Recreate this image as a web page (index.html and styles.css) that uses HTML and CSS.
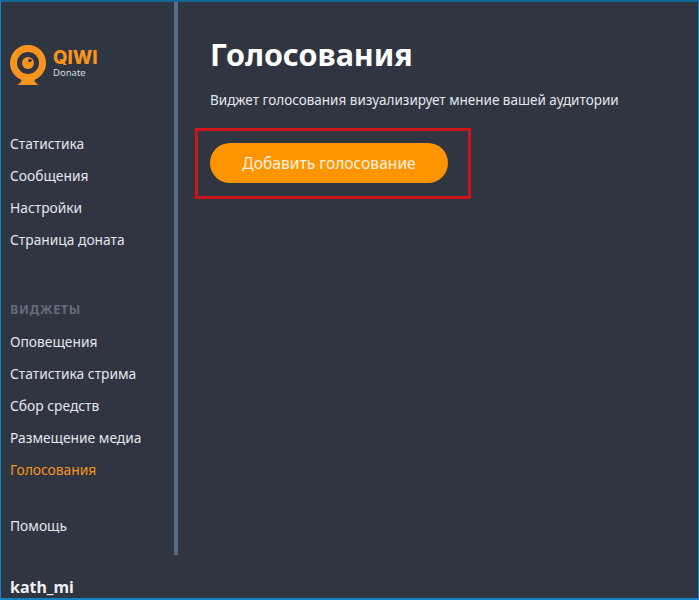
FILE: index.html
```html
<!DOCTYPE html>
<html lang="ru">
<head>
    <meta charset="UTF-8">
    <meta name="viewport" content="width=device-width, initial-scale=1.0">
    <title>Голосования</title>
    <link rel="stylesheet" href="styles.css">
</head>
<body>
    <div class="window">
        <aside class="sidebar">
            <div class="sidebar-inner">
                <a class="logo" href="#">
                    <svg class="logo-icon" width="37" height="41" viewBox="0 0 37 41">
                        <path d="M7 40 C10 39 12 36 12 32 H24 C24 36 26 39 29 40 Z" fill="#f7941d"/>
                        <circle cx="18" cy="18" r="14.5" fill="none" stroke="#f7941d" stroke-width="7"/>
                        <circle cx="18" cy="18" r="6" fill="#f7941d"/>
                        <circle cx="20" cy="15.5" r="1.7" fill="#2f3541"/>
                    </svg>
                    <div class="logo-text">
                        <span class="logo-name">QIWI</span>
                        <span class="logo-sub">Donate</span>
                    </div>
                </a>
                <nav class="nav nav-main">
                    <a href="#">Статистика</a>
                    <a href="#">Сообщения</a>
                    <a href="#">Настройки</a>
                    <a href="#">Страница доната</a>
                </nav>
                <h4 class="nav-title">ВИДЖЕТЫ</h4>
                <nav class="nav">
                    <a href="#">Оповещения</a>
                    <a href="#">Статистика стрима</a>
                    <a href="#">Сбор средств</a>
                    <a href="#">Размещение медиа</a>
                    <a class="active" href="#">Голосования</a>
                </nav>
                <nav class="nav nav-help">
                    <a href="#">Помощь</a>
                </nav>
            </div>
            <div class="username">kath_mi</div>
        </aside>
        <main class="main">
            <h1>Голосования</h1>
            <p>Виджет голосования визуализирует мнение вашей аудитории</p>
            <div class="highlight">
                <button>Добавить голосование</button>
            </div>
        </main>
    </div>
</body>
</html>
```

FILE: styles.css
```css
html, body {
    margin: 0;
    height: 100%;
}

body {
    font-family: "Noto Sans", Arial, sans-serif;
    font-size: 13.8px;
    color: #e4e6ea;
    background-color: #2f3541;
    overflow: hidden;
}

.window {
    display: flex;
    height: 600px;
    box-sizing: border-box;
    border: 1px solid #1583c4;
    border-top: 2px solid #14649a;
    border-bottom-width: 2px;
}

.sidebar {
    width: 177px;
    flex-shrink: 0;
    display: flex;
    flex-direction: column;
}

.sidebar-inner {
    height: 553px;
    box-sizing: border-box;
    border-right: 4px solid #566a8a;
    padding: 43px 0 0 9px;
}

.logo {
    display: flex;
    align-items: flex-start;
    gap: 6px;
    height: 41px;
    margin-bottom: 42px;
    text-decoration: none;
}

.logo-text {
    display: flex;
    flex-direction: column;
    padding-top: 3px;
}

.logo-name {
    font-family: Inter, "Noto Sans", sans-serif;
    font-size: 18.5px;
    font-weight: 800;
    line-height: 18px;
    color: #f7941d;
}

.logo-sub {
    font-size: 9.5px;
    line-height: 14px;
    color: #d5d9e0;
}

.nav a {
    display: block;
    height: 32px;
    line-height: 32px;
    color: #e4e6ea;
    text-decoration: none;
}

.nav a.active {
    color: #f7941d;
}

.nav-title {
    margin: 38px 0 0;
    height: 32px;
    line-height: 32px;
    font-size: 12.5px;
    font-weight: 700;
    letter-spacing: 0.7px;
    color: #646b79;
}

.nav-help {
    margin-top: 24px;
}

.username {
    padding: 22px 0 0 9px;
    font-size: 16px;
    font-weight: 700;
    line-height: 20px;
    color: #eef0f3;
}

.main {
    padding: 33px 0 0 32px;
}

.main h1 {
    margin: 0;
    font-size: 30.5px;
    font-weight: 700;
    line-height: 38px;
    color: #fff;
}

.main p {
    margin: 17px 0 0;
    line-height: 20px;
    font-size: 13.5px;
}

.highlight {
    width: 276px;
    height: 71px;
    box-sizing: border-box;
    margin: 18px 0 0 -15px;
    padding: 12px 0 0 12px;
    border: 3px solid #d0121b;
}

button {
    display: block;
    width: 238px;
    height: 40px;
    padding: 0;
    font-family: inherit;
    font-size: 15.6px;
    color: #fdf3e3;
    background-color: #ff9500;
    border: none;
    border-radius: 20px;
    cursor: pointer;
}
```
